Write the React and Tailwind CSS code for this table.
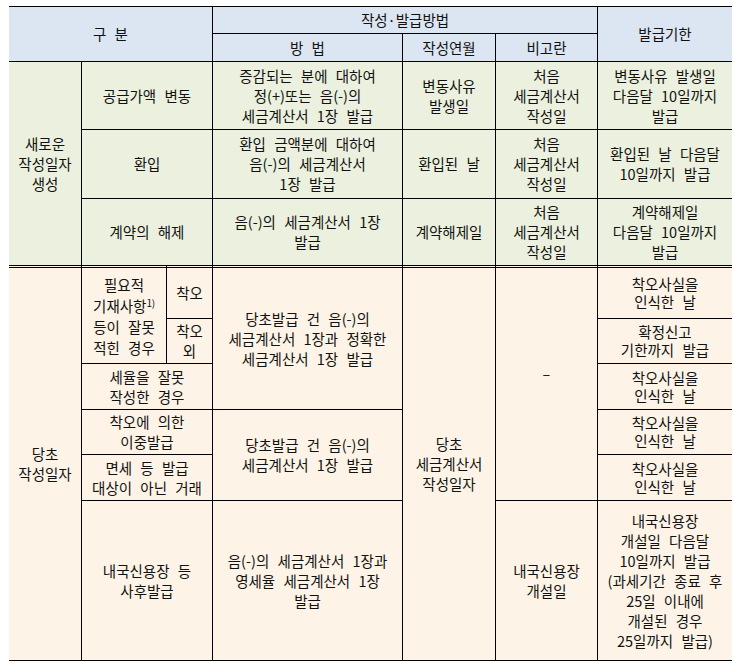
import React from 'react';

const HEAD = 'bg-[#dce6f2]';
const GREEN = 'bg-[#ebf1de]';
const ORANGE = 'bg-[#fdf4e7]';

const Cell = ({ className = '', lines, children, tight }) => (
  <div
    className={`flex items-center justify-center text-center whitespace-nowrap border-black ${tight ? 'leading-[18px]' : 'leading-[20px]'} ${className}`}
  >
    <div>
      {children ||
        lines.map((line, i) => (
          <div key={i}>{line}</div>
        ))}
    </div>
  </div>
);

export default function App() {
  return (
    <div
      className="min-h-[672px] w-[738px] bg-white pt-[6px] pl-[9px] text-[14.5px] text-[#111] [word-spacing:5px]"
      style={{ fontFamily: '"Noto Sans CJK KR", "Noto Sans", sans-serif' }}
    >
      <div className="grid w-[723px] grid-cols-[72px_85px_46px_190px_93px_102px_135px] grid-rows-[27px_28px_68px_69px_67px_53px_45px_46px_45px_46px_160px] border-b border-black">
        {/* header */}
        <Cell className={`col-start-1 col-span-3 row-start-1 row-span-2 border-t ${HEAD}`} lines={['구 분']} />
        <Cell className={`col-start-4 col-span-3 row-start-1 border-t border-l ${HEAD}`} lines={['작성·발급방법']} />
        <Cell className={`col-start-7 row-start-1 row-span-2 border-t border-l ${HEAD}`} lines={['발급기한']} />
        <Cell className={`col-start-4 row-start-2 border-t border-l ${HEAD}`} lines={['방 법']} />
        <Cell className={`col-start-5 row-start-2 border-t border-l ${HEAD}`} lines={['작성연월']} />
        <Cell className={`col-start-6 row-start-2 border-t border-l ${HEAD}`} lines={['비고란']} />

        {/* 새로운 작성일자 생성 */}
        <Cell className={`col-start-1 row-start-3 row-span-3 border-t ${GREEN}`} lines={['새로운', '작성일자', '생성']} />

        <Cell className={`col-start-2 col-span-2 row-start-3 border-t border-l ${GREEN}`} lines={['공급가액 변동']} />
        <Cell
          className={`col-start-4 row-start-3 border-t border-l ${GREEN}`}
          lines={['증감되는 분에 대하여', '정(+)또는 음(-)의', '세금계산서 1장 발급']}
        />
        <Cell className={`col-start-5 row-start-3 border-t border-l ${GREEN}`} lines={['변동사유', '발생일']} />
        <Cell className={`col-start-6 row-start-3 border-t border-l ${GREEN}`} lines={['처음', '세금계산서', '작성일']} />
        <Cell
          className={`col-start-7 row-start-3 border-t border-l ${GREEN}`}
          lines={['변동사유 발생일', '다음달 10일까지', '발급']}
        />

        <Cell className={`col-start-2 col-span-2 row-start-4 border-t border-l ${GREEN}`} lines={['환입']} />
        <Cell
          className={`col-start-4 row-start-4 border-t border-l ${GREEN}`}
          lines={['환입 금액분에 대하여', '음(-)의 세금계산서', '1장 발급']}
        />
        <Cell className={`col-start-5 row-start-4 border-t border-l ${GREEN}`} lines={['환입된 날']} />
        <Cell className={`col-start-6 row-start-4 border-t border-l ${GREEN}`} lines={['처음', '세금계산서', '작성일']} />
        <Cell
          className={`col-start-7 row-start-4 border-t border-l ${GREEN}`}
          lines={['환입된 날 다음달', '10일까지 발급']}
        />

        <Cell className={`col-start-2 col-span-2 row-start-5 border-t border-l ${GREEN}`} lines={['계약의 해제']} />
        <Cell
          className={`col-start-4 row-start-5 border-t border-l ${GREEN}`}
          lines={['음(-)의 세금계산서 1장', '발급']}
        />
        <Cell className={`col-start-5 row-start-5 border-t border-l ${GREEN}`} lines={['계약해제일']} />
        <Cell className={`col-start-6 row-start-5 border-t border-l ${GREEN}`} lines={['처음', '세금계산서', '작성일']} />
        <Cell
          className={`col-start-7 row-start-5 border-t border-l ${GREEN}`}
          lines={['계약해제일', '다음달 10일까지', '발급']}
        />

        {/* 당초 작성일자 */}
        <Cell
          className={`col-start-1 row-start-6 row-span-6 border-t-[3px] border-double ${ORANGE}`}
          lines={['당초', '작성일자']}
        />

        <Cell className={`col-start-2 row-start-6 row-span-2 border-t-[3px] border-double border-l ${ORANGE} leading-[21px]`}>
          <div>필요적</div>
          <div>
            기재사항<sup className="text-[10px] tracking-tight [word-spacing:0]">1)</sup>
          </div>
          <div>등이 잘못</div>
          <div>적힌 경우</div>
        </Cell>
        <Cell className={`col-start-3 row-start-6 border-t-[3px] border-double border-l ${ORANGE}`} lines={['착오']} />
        <Cell className={`col-start-3 row-start-7 border-t border-l ${ORANGE}`} lines={['착오', '외']} />
        <Cell className={`col-start-2 col-span-2 row-start-8 border-t border-l ${ORANGE}`} lines={['세율을 잘못', '작성한 경우']} />
        <Cell className={`col-start-2 col-span-2 row-start-9 border-t border-l ${ORANGE}`} lines={['착오에 의한', '이중발급']} />
        <Cell
          className={`col-start-2 col-span-2 row-start-10 border-t border-l ${ORANGE}`}
          lines={['면세 등 발급', '대상이 아닌 거래']}
        />
        <Cell
          className={`col-start-2 col-span-2 row-start-11 border-t border-l ${ORANGE}`}
          lines={['내국신용장 등', '사후발급']}
        />

        <Cell
          className={`col-start-4 row-start-6 row-span-3 border-t-[3px] border-double border-l ${ORANGE}`}
          lines={['당초발급 건 음(-)의', '세금계산서 1장과 정확한', '세금계산서 1장 발급']}
        />
        <Cell
          className={`col-start-4 row-start-9 row-span-2 border-t border-l ${ORANGE}`}
          lines={['당초발급 건 음(-)의', '세금계산서 1장 발급']}
        />
        <Cell
          className={`col-start-4 row-start-11 border-t border-l ${ORANGE}`}
          lines={['음(-)의 세금계산서 1장과', '영세율 세금계산서 1장', '발급']}
        />

        <Cell
          className={`col-start-5 row-start-6 row-span-6 border-t-[3px] border-double border-l ${ORANGE}`}
          lines={['당초', '세금계산서', '작성일자']}
        />

        <Cell className={`col-start-6 row-start-6 row-span-5 border-t-[3px] border-double border-l pb-5 ${ORANGE}`} lines={['–']} />
        <Cell className={`col-start-6 row-start-11 border-t border-l ${ORANGE}`} lines={['내국신용장', '개설일']} />

        <Cell tight className={`col-start-7 row-start-6 border-t-[3px] border-double border-l ${ORANGE}`} lines={['착오사실을', '인식한 날']} />
        <Cell tight className={`col-start-7 row-start-7 border-t border-l ${ORANGE}`} lines={['확정신고', '기한까지 발급']} />
        <Cell tight className={`col-start-7 row-start-8 border-t border-l ${ORANGE}`} lines={['착오사실을', '인식한 날']} />
        <Cell tight className={`col-start-7 row-start-9 border-t border-l ${ORANGE}`} lines={['착오사실을', '인식한 날']} />
        <Cell tight className={`col-start-7 row-start-10 border-t border-l ${ORANGE}`} lines={['착오사실을', '인식한 날']} />
        <Cell
          className={`col-start-7 row-start-11 border-t border-l ${ORANGE}`}
          lines={['내국신용장', '개설일 다음달', '10일까지 발급', '(과세기간 종료 후', '25일 이내에', '개설된 경우', '25일까지 발급)']}
        />
      </div>
    </div>
  );
}
